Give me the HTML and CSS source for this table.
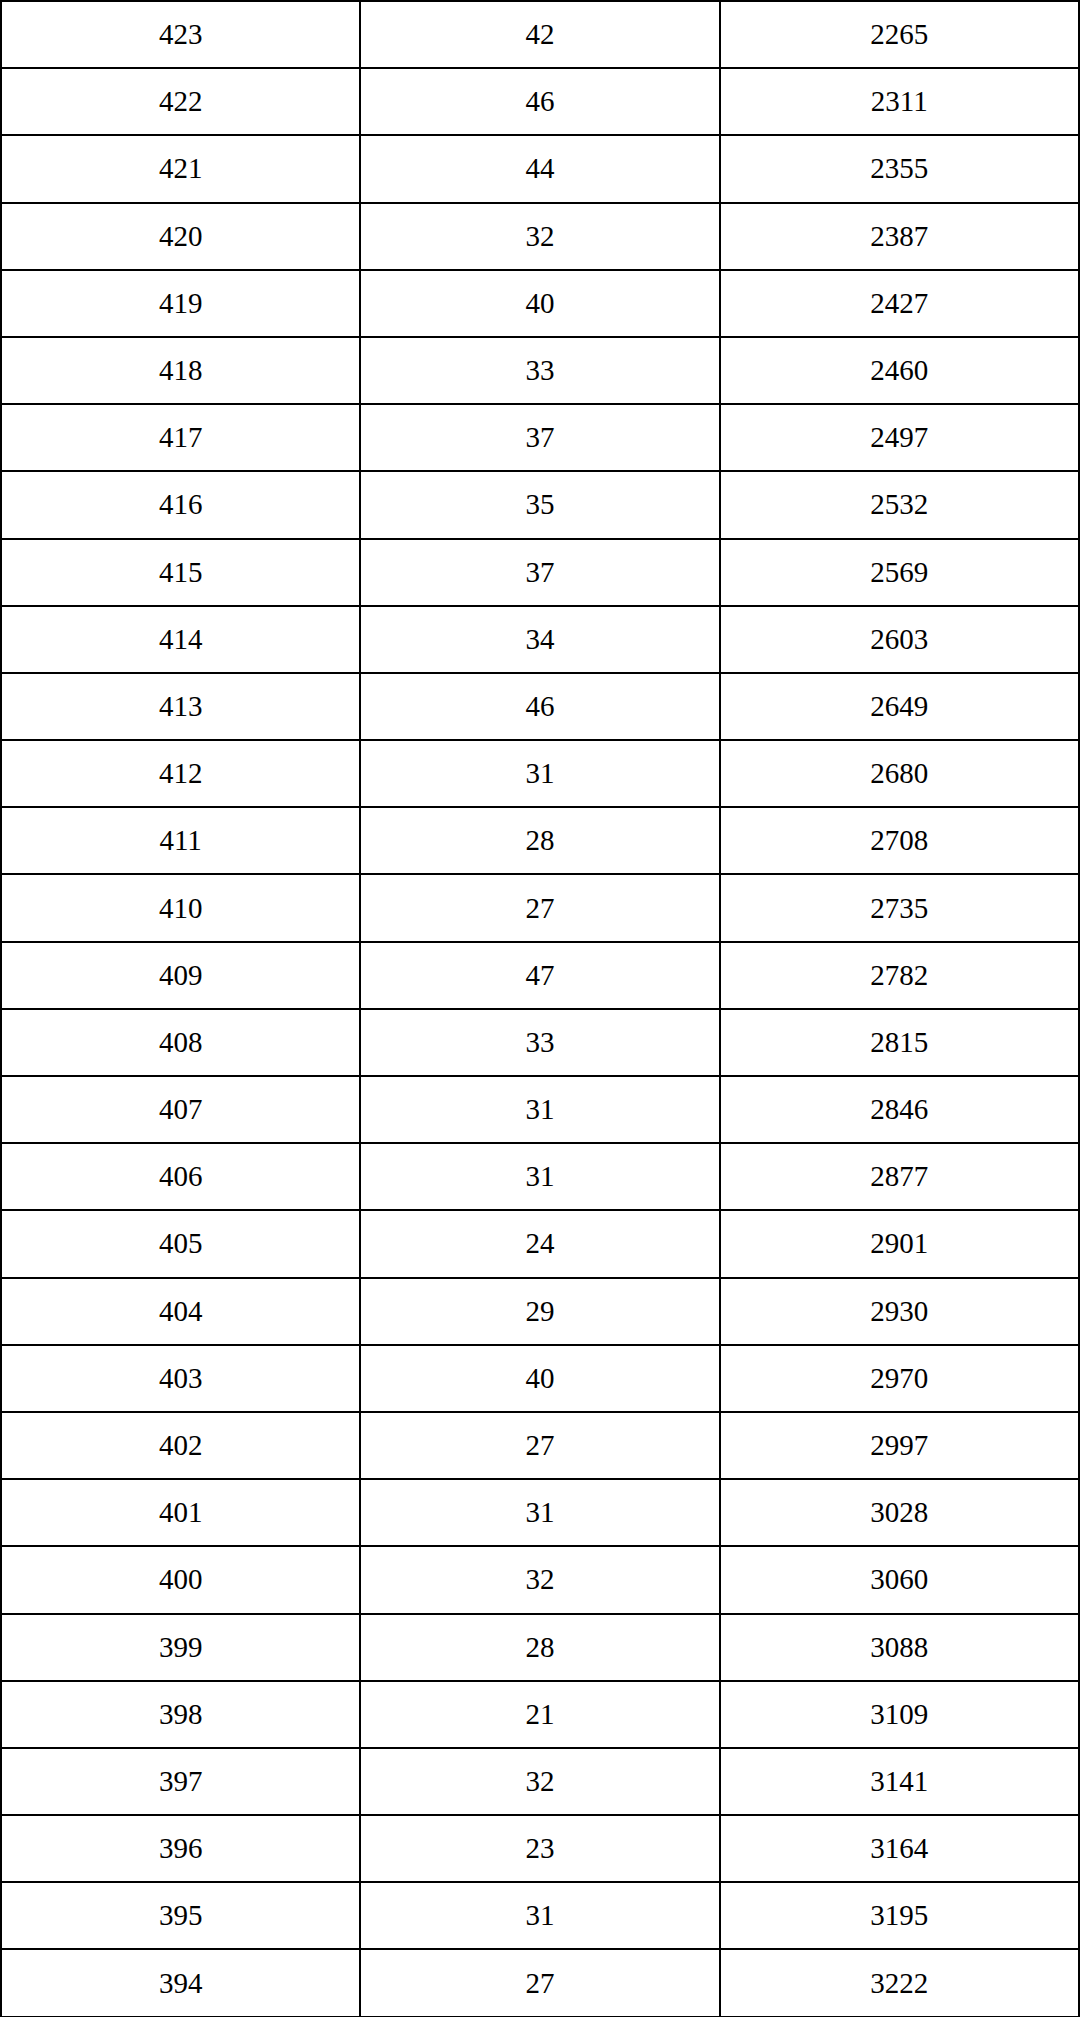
FILE: index.html
```html
<!DOCTYPE html>
<html>
<head>
<meta charset="utf-8">
<link rel="stylesheet" href="styles.css">
</head>
<body>
<table class="score-table">
<tbody>
<tr><td>423</td><td>42</td><td>2265</td></tr>
<tr><td>422</td><td>46</td><td>2311</td></tr>
<tr><td>421</td><td>44</td><td>2355</td></tr>
<tr><td>420</td><td>32</td><td>2387</td></tr>
<tr><td>419</td><td>40</td><td>2427</td></tr>
<tr><td>418</td><td>33</td><td>2460</td></tr>
<tr><td>417</td><td>37</td><td>2497</td></tr>
<tr><td>416</td><td>35</td><td>2532</td></tr>
<tr><td>415</td><td>37</td><td>2569</td></tr>
<tr><td>414</td><td>34</td><td>2603</td></tr>
<tr><td>413</td><td>46</td><td>2649</td></tr>
<tr><td>412</td><td>31</td><td>2680</td></tr>
<tr><td>411</td><td>28</td><td>2708</td></tr>
<tr><td>410</td><td>27</td><td>2735</td></tr>
<tr><td>409</td><td>47</td><td>2782</td></tr>
<tr><td>408</td><td>33</td><td>2815</td></tr>
<tr><td>407</td><td>31</td><td>2846</td></tr>
<tr><td>406</td><td>31</td><td>2877</td></tr>
<tr><td>405</td><td>24</td><td>2901</td></tr>
<tr><td>404</td><td>29</td><td>2930</td></tr>
<tr><td>403</td><td>40</td><td>2970</td></tr>
<tr><td>402</td><td>27</td><td>2997</td></tr>
<tr><td>401</td><td>31</td><td>3028</td></tr>
<tr><td>400</td><td>32</td><td>3060</td></tr>
<tr><td>399</td><td>28</td><td>3088</td></tr>
<tr><td>398</td><td>21</td><td>3109</td></tr>
<tr><td>397</td><td>32</td><td>3141</td></tr>
<tr><td>396</td><td>23</td><td>3164</td></tr>
<tr><td>395</td><td>31</td><td>3195</td></tr>
<tr><td>394</td><td>27</td><td>3222</td></tr>
</tbody>
</table>
</body>
</html>
```

FILE: styles.css
```css
html, body {
  margin: 0;
  padding: 0;
  background: #ffffff;
}
.score-table {
  width: 1080px;
  border-collapse: collapse;
  table-layout: fixed;
  font-family: "Liberation Serif", "Noto Serif CJK SC", serif;
  font-size: 29px;
  color: #000000;
}
.score-table td {
  border: 2px solid #000000;
  height: 65.2px;
  padding: 0;
  text-align: center;
  vertical-align: middle;
  line-height: 1;
}
```
